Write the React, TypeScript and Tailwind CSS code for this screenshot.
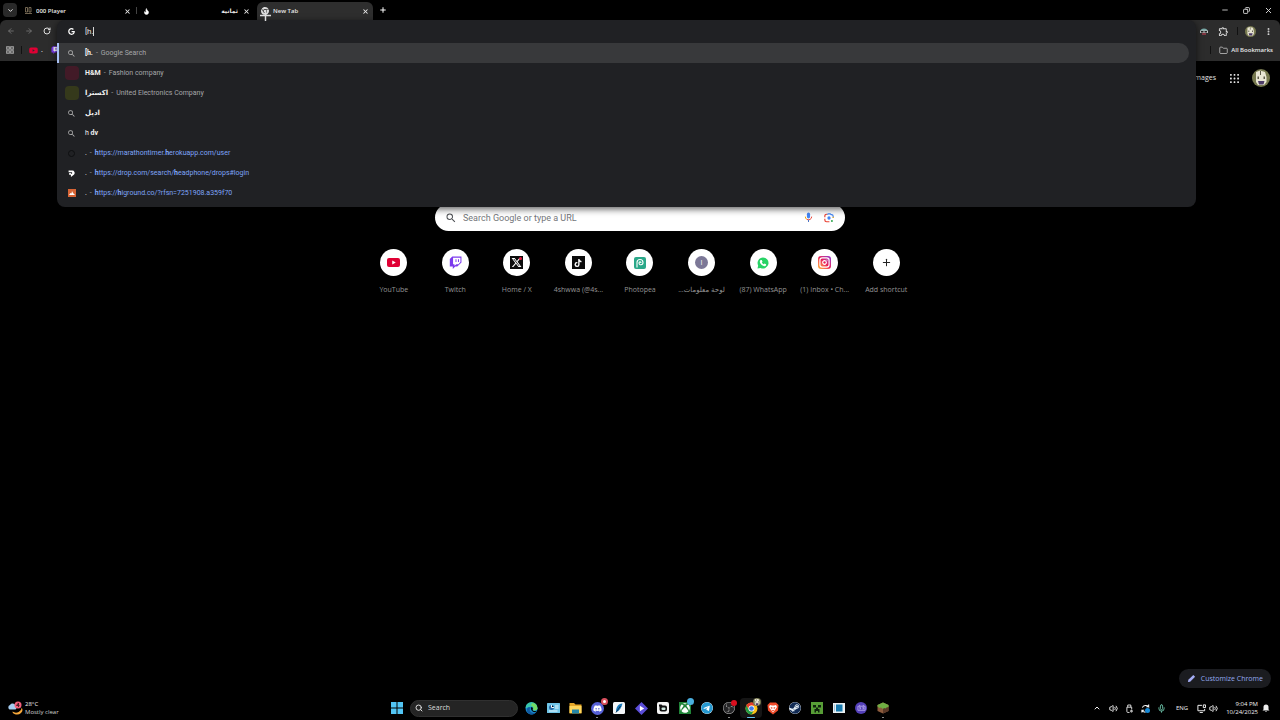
import React from "react";
import {
  FaYoutube, FaXTwitter, FaTiktok, FaWhatsapp, FaDiscord, FaSteam, FaXbox, FaTelegram, FaGoogle, FaChrome,
} from "react-icons/fa6";
import { SiObsstudio } from "react-icons/si";
import { MdSearch, MdOutlineExtension } from "react-icons/md";
import {
  ChevronDown, ChevronUp, X, Plus, ArrowLeft, ArrowRight, RotateCw, Search, Minus, Copy, Folder,
  EllipsisVertical, Volume2, Mic, Flame, Instagram,
} from "lucide-react";

function TwitchMark({ className }: { className: string }) {
  return (
    <svg viewBox="0 0 24 24" className={className}>
      <path d="M6 1 1.5 5.5v14H7V24l4.5-4.5h3.8L23 12V1z" fill="#7c3aed" />
      <path d="M7.5 3h13.6v8.2L17.5 15h-4l-3.4 3.2V15h-2.6z" fill="#fff" />
      <path d="M12 6.2h1.8v5H12zM16.6 6.2h1.8v5h-1.8z" fill="#7c3aed" />
    </svg>
  );
}

function Avatar({ className }: { className: string }) {
  return (
    <svg viewBox="0 0 18 18" className={className}>
      <circle cx="9" cy="9" r="9" fill="#77794f" />
      <path d="M4 3 8 1.500 13 3l1.500 5v5L12 16H6l-2-3z" fill="#e9e6d4" />
      <path d="M5.500 7.500h1.500v2.500H5.500zM11.500 7.500H13v2.500h-1.500zM8 2h1v4H8z" fill="#5d5a49" />
      <path d="M6 12h6.500l-1 3.500H7z" fill="#4c3b66" />
    </svg>
  );
}

function ChromeMark({ className }: { className: string }) {
  return (
    <svg viewBox="0 0 24 24" className={className}>
      <circle cx="12" cy="12" r="11" fill="#fbc116" />
      <path d="M2.5 6.5A11 11 0 0 1 21.5 6.5H12a5.5 5.5 0 0 0-4.8 8.3z" fill="#e33b2e" />
      <path d="M2.5 6.5A11 11 0 0 0 12 23l4.8-8.2a5.5 5.5 0 0 1-9.6 0z" fill="#229b48" />
      <circle cx="12" cy="12" r="5.5" fill="#fff" />
      <circle cx="12" cy="12" r="4.3" fill="#3f7de8" />
    </svg>
  );
}

function GridDots({ className }: { className: string }) {
  return (
    <svg viewBox="0 0 10 10" className={className} fill="currentColor">
      {[0, 4, 8].map((y) => [0, 4, 8].map((x) => <rect key={`${x}-${y}`} x={x} y={y} width="2" height="2" rx="0.5" />))}
    </svg>
  );
}

function Tab({ icon, title, active, rtl, width }: { icon: React.ReactNode; title: string; active?: boolean; rtl?: boolean; width: string }) {
  return (
    <div className={`flex h-[18px] items-center gap-1 self-end rounded-t-md px-1 ${width} ${active ? "bg-[#2e2e2e]" : ""}`}>
      <span className="flex w-2 shrink-0 justify-center">{icon}</span>
      <span className="min-w-0 flex-1 truncate text-[6px] font-semibold leading-[10px] text-[#e8e8e8]" dir={rtl ? "rtl" : "ltr"}>{title}</span>
      <button aria-label={`Close ${title}`} className="flex w-2 justify-center text-[#e8e8e8]"><X size={7} strokeWidth={3.5} /></button>
    </div>
  );
}

type Row = { icon: React.ReactNode; body: React.ReactNode };
const lens = <MdSearch size={9} className="text-[#b8b8b8]" />;
const dash = <span className="px-[3px] text-[#a0a0a0]">-</span>;
const rows: Row[] = [
  { icon: lens, body: <><b>[h.</b>{dash}<span className="text-[#a5a6a8]">Google Search</span></> },
  { icon: <span className="size-[14px] rounded-sm bg-[#421a27]" />, body: <><b>H&amp;M</b>{dash}<span className="text-[#a5a6a8]">Fashion company</span></> },
  { icon: <span className="size-[14px] rounded-sm bg-[#35391b]" />, body: <><b>اكسترا</b>{dash}<span className="text-[#a5a6a8]">United Electronics Company</span></> },
  { icon: lens, body: <b>اديل</b> },
  { icon: lens, body: <>h <b>dv</b></> },
  { icon: <span className="size-[7px] rounded-full border border-[#0e0f10]" />, body: <>.{dash}<a href="#timer" className="text-[#7ea4f8]"><b>h</b>ttps://marathontimer.<b>h</b>erokuapp.com/user</a></> },
  {
    icon: <svg viewBox="0 0 12 12" className="size-[7px]"><path d="M1 1h6a4 4 0 0 1 3 7L5 12V8H2V5h3v1.500h2V4H1z" fill="#fff" /></svg>,
    body: <>.{dash}<a href="#drop" className="text-[#7ea4f8]"><b>h</b>ttps://drop.com/search/<b>h</b>eadphone/drops#login</a></>,
  },
  {
    icon: <svg viewBox="0 0 16 16" className="size-2"><path d="M0 0h16v16H0z" fill="#d66435" /><path d="m2 12 3-4 2 1 1-5 2 4 4 4z" fill="#fff" /></svg>,
    body: <>.{dash}<a href="#higround" className="text-[#7ea4f8]"><b>h</b>ttps://<b>h</b>iground.co/?rfsn=7251908.a359f70</a></>,
  },
];

function Omnibox() {
  return (
    <section aria-label="Address bar" className="absolute left-[57px] right-[84px] top-5 z-10 rounded-lg bg-[#202124] pb-1 font-[Roboto,'DejaVu_Sans',sans-serif] shadow-[0_2px_7px_rgba(0,0,0,0.65)]">
      <div className="flex h-[23px] items-center pl-[11px]">
        <FaGoogle size={7} className="mr-[10px] shrink-0 text-white" />
        <input aria-label="Search or enter address" defaultValue="[h." className="w-2 bg-transparent p-0 text-[8px] leading-3 text-[#e2e2e2] outline-none" />
        <span className="h-[9px] w-px bg-[#d8d8d8]" />
      </div>
      <ul>
        {rows.map((row, i) => (
          <li key={i} className={`mr-[7px] flex h-5 items-center border-l-2 pl-1 text-[7px] leading-[10px] text-[#f0f0f0] ${i === 0 ? "rounded-r-full border-[#a8c1f5] bg-[#38393b]" : "border-transparent"}`}>
            <span className="mr-[5px] flex w-[17px] shrink-0 items-center justify-center">{row.icon}</span>
            <span className="whitespace-nowrap">{row.body}</span>
          </li>
        ))}
      </ul>
    </section>
  );
}

const shortcuts: { label: string; icon: React.ReactNode; rtl?: boolean }[] = [
  { label: "YouTube", icon: <svg viewBox="0 0 26 18" className="w-[13px]"><rect width="26" height="18" rx="4" fill="#e00034" /><path d="m10.5 5 7 4-7 4z" fill="#fff" /></svg> },
  { label: "Twitch", icon: <TwitchMark className="size-[13px]" /> },
  { label: "Home / X", icon: <span className="relative flex size-[13px] items-center justify-center bg-[#0b0b0b] text-white"><FaXTwitter size={11} /><i className="absolute right-px top-px size-[3px] rounded-full bg-[#e5173e]" /></span> },
  { label: "4shwwa (@4s...", icon: <span className="flex size-[13px] items-center justify-center bg-[#0b0b0b] text-white"><FaTiktok size={8} /></span> },
  { label: "Photopea", icon: <svg viewBox="0 0 24 24" className="size-3"><rect width="24" height="24" rx="4" fill="#2aa889" /><path d="M6 21V11a6 6 0 0 1 12 0c0 6-8 6-8 1 0-3 4-3 4 0" fill="none" stroke="#fff" strokeWidth="2.2" /></svg> },
  { label: "لوحة معلومات...", rtl: true, icon: <span className="flex size-[13px] items-center justify-center rounded-full bg-[#7c7897] text-[7px] leading-none text-white">I</span> },
  {
    label: "(87) WhatsApp",
    icon: (
      <svg viewBox="0 0 24 24" className="size-3">
        <path d="M12 1a11 11 0 1 1-5 20.800L1 23l1.300-6A11 11 0 0 1 12 1z" fill="#28d366" />
        <path d="M7 6h2.500l1.500 3.500-1.300 1.500c1 1.800 2 2.700 3.800 3.500l1.500-1.600 3.200 1.600v2c-1.500 2.500-4 2-7 .5-3.500-2-6-5.500-5.500-8.500z" fill="#fff" />
      </svg>
    ),
  },
  { label: "(1) Inbox • Ch...", icon: <span className="flex size-[13px] items-center justify-center rounded-[3px] bg-linear-to-tr from-[#ffb52b] via-[#ec1558] to-[#8c20d5] text-white"><Instagram size={11} strokeWidth={2.5} /></span> },
  { label: "Add shortcut", icon: <Plus size={11} strokeWidth={2.2} className="text-[#222]" /> },
];

function NewTabPage() {
  return (
    <main className="relative flex flex-1 flex-col">
      <nav className="flex h-[34px] items-center justify-end pr-[10px] text-[#e4e4e4]">
        <a href="#images" className="mr-[14px] text-[7px] font-medium leading-3">Images</a>
        <button aria-label="Google apps" className="mr-[13px]"><GridDots className="size-[9px]" /></button>
        <button aria-label="Account"><Avatar className="size-[18px]" /></button>
      </nav>
      <div className="mx-auto mt-[109px] flex h-[27px] w-full max-w-[410px] items-center rounded-full bg-white px-[11px]">
        <MdSearch size={12} className="-ml-px shrink-0 text-[#4b4e52]" />
        <input aria-label="Search Google" placeholder="Search Google or type a URL" className="ml-[6px] min-w-0 flex-1 bg-transparent font-[Roboto,sans-serif] text-[9px] leading-3 outline-none placeholder:text-[#73767a]" />
        <button aria-label="Search by voice" className="mr-[11px]">
          <svg viewBox="0 0 20 24" className="h-[11px] w-[9px]" fill="none" strokeWidth="2.2">
            <rect x="6.5" y="1" width="7" height="13" rx="3.5" fill="#4285f4" />
            <path d="M3 10a7 7 0 0 0 3 6" stroke="#f2a600" /><path d="M17 10a7 7 0 0 1-11 6" stroke="#ea4335" /><path d="M10 17v5" stroke="#4773c5" />
          </svg>
        </button>
        <button aria-label="Search by image">
          <svg viewBox="0 0 24 24" className="size-[10px]" fill="none" strokeWidth="2.8">
            <path d="M2 10V7a4 4 0 0 1 4-4h2" stroke="#ea4335" /><path d="M8 4l2-2h5l2 2h1a4 4 0 0 1 4 4v3" stroke="#4285f4" />
            <path d="M2 14v3a4 4 0 0 0 4 4h7" stroke="#ea4335" /><path d="M22 9v3" stroke="#f2a600" />
            <circle cx="12" cy="12" r="4" fill="#4285f4" /><circle cx="19" cy="19" r="2.5" fill="#34a853" />
          </svg>
        </button>
      </div>
      <ul className="mx-auto mt-[18px] grid w-full max-w-[554px] grid-cols-9">
        {shortcuts.map((s) => (
          <li key={s.label}>
            <a href="#shortcut" className="flex flex-col items-center gap-[9px]">
              <span className="flex size-[27px] items-center justify-center rounded-full bg-white">{s.icon}</span>
              <span dir={s.rtl ? "rtl" : "ltr"} className="whitespace-nowrap text-[7px] leading-[10px] text-[#949494]">{s.label}</span>
            </a>
          </li>
        ))}
      </ul>
      <button className="absolute bottom-2 right-[9px] flex h-[19px] items-center gap-1 rounded-full bg-[#1b1c20] px-2 text-[7px] font-medium leading-3 text-[#93a9ee]">
        <svg viewBox="0 0 20 20" className="mr-px size-[9px]"><path d="m2 18 1-5L14 2l4 4L7 17z" fill="#a5adf5" /></svg> Customize Chrome
      </button>
    </main>
  );
}

const apps: { name: string; icon: React.ReactNode; mark?: string }[] = [
  {
    name: "Edge",
    icon: <svg viewBox="0 0 24 24" className="size-[13px]"><circle cx="12" cy="12" r="11" fill="#168bd1" /><path d="M1 11A11 11 0 0 1 23 11c0 4-3 5-8 4 2-4-1-7-5-6-5 0-8 3-9 2" fill="#39c6ad" /><path d="M13 2a11 11 0 0 1 10 10c-1 4-5 4-8 3 2-5-1-8-4-8z" fill="#72db62" /><path d="M10 10c-4 5 1 13 10 9-6 9-20 2-16-7 1-2 4-3 6-2" fill="#115a9f" /><path d="M11 10c4-1 4 2 3 5 2 2 5 2 8 1-4 5-12 1-11-6" fill="#020407" /></svg>,
  },
  { name: "Control Panel", icon: <svg viewBox="0 0 26 20" className="w-[13px]"><rect width="26" height="20" rx="1" fill="#70c5e8" /><circle cx="9" cy="9" r="5" fill="#276ba8" /><path d="M9 4v5h5M16 6h7M16 10h7M4 16h17" stroke="#eaf8ff" strokeWidth="2" /></svg> },
  { name: "File Explorer", icon: <svg viewBox="0 0 26 24" className="w-[13px]"><path d="M1 2h9l3 3h12v18H1z" fill="#e6a728" /><path d="M1 8h24v14H1z" fill="#ffd65c" /><path d="M6 15h14v8H6z" fill="#2486a7" /></svg> },
  { name: "Discord", mark: "w-[2px] bg-[#999]", icon: <span className="relative flex size-[13px] items-center justify-center rounded-full bg-[#5661d7] text-white"><FaDiscord size={9} /><i className="absolute -right-1 -top-1 size-[7px] rounded-full border-2 border-[#d9505e] bg-white" /></span> },
  { name: "Quill", icon: <svg viewBox="0 0 24 24" className="size-3"><rect width="24" height="24" rx="3" fill="#f3f6f8" /><path d="M19 3C10 4 6 10 6 20c7-2 11-8 13-17" fill="#1678b9" /><path d="m6 21 9-13" stroke="#0a3153" strokeWidth="2" /></svg> },
  { name: "Clips", icon: <svg viewBox="0 0 24 24" className="size-[13px]"><path d="m12 0 12 12-12 12L0 12z" fill="#5b4dd8" /><path d="m9 7 8 5-8 5z" fill="#fff" /></svg> },
  { name: "Camera", icon: <svg viewBox="0 0 24 24" className="size-3"><rect width="24" height="24" rx="4" fill="#f5f5f5" /><path d="M4 5h5l2 2h5a4 4 0 0 1 4 4v4a4 4 0 0 1-4 4H9a4 4 0 0 1-4-4V9H4z" fill="#101010" /><rect x="9" y="11" width="8" height="5" rx="2" fill="#cfe8df" /></svg> },
  { name: "Xbox", icon: <span className="relative flex size-3 items-center justify-center bg-[#208438] text-white"><FaXbox size={10} /><i className="absolute -right-[3px] -top-1 size-[7px] rounded-full bg-[#4aafdf]" /></span> },
  { name: "Telegram", icon: <FaTelegram size={12} className="rounded-full bg-white text-[#2698cf]" /> },
  { name: "OBS Studio", mark: "w-[2px] bg-[#999]", icon: <span className="relative rounded-full bg-[#242426] text-[#aaa]"><SiObsstudio size={12} /><i className="absolute -right-0.5 -top-0.5 size-[6px] rounded-full bg-[#d90e1e]" /></span> },
  { name: "Chrome", mark: "w-2 bg-[#67c4f1]", icon: <span className="relative"><ChromeMark className="size-[13px]" /><Avatar className="absolute -right-[3px] -top-1 size-2" /></span> },
  { name: "Brave", icon: <svg viewBox="0 0 24 26" className="h-[13px] w-3"><path d="m6 1-5 5 1 11 10 8 10-8 1-11-5-5z" fill="#ee4a29" /><path d="m6 6 4 1h4l4-1 2 4-4 6-4 5-4-5-4-6z" fill="#fff" /><path d="m7 10 4 1-1 4zM17 10l-4 1 1 4zM9 17l3 2 3-2-3-1z" fill="#ee4a29" /></svg> },
  { name: "Steam", icon: <FaSteam size={12} className="rounded-full bg-[#e3edf5] text-[#112b55]" /> },
  { name: "Minecraft Launcher", icon: <svg viewBox="0 0 24 24" className="size-3"><path d="M0 0h24v24H0z" fill="#579d36" /><path d="M4 6h6v5H4zM14 6h6v5h-6zM10 11h4v3h3v7h-3v-3h-4v3H7v-7h3z" fill="#0e210c" /></svg> },
  { name: "Window", icon: <svg viewBox="0 0 24 20" className="w-3"><path d="M0 0h24v20H0z" fill="#e9eff2" /><path d="M6 3h13v14H6z" fill="#1578ad" /><path d="M2 3h2v14H2z" fill="#9dc5d9" /></svg> },
  { name: "Bot", icon: <span className="flex size-3 items-center justify-center rounded-full bg-[#5440b9]"><svg viewBox="0 0 20 16" className="w-[9px]"><path d="M2 5h16v9H2zM6 2v3M14 2v3M5 8h3v3H5M12 8h3v3h-3" fill="none" stroke="#bcaef2" strokeWidth="1.8" /></svg></span> },
  { name: "Minecraft", mark: "w-[2px] bg-[#999]", icon: <svg viewBox="0 0 24 24" className="size-3"><path d="m12 1 11 5v12l-11 5-11-5V6z" fill="#8c5b3d" /><path d="m12 11 11-5v12l-11 5z" fill="#5b3928" /><path d="m12 1 11 5v4l-4 1-2 2-3-1-2 2-4-3-3 1-4-3V6z" fill="#70ae43" /></svg> },
];

function Taskbar() {
  return (
    <footer className="grid h-6 grid-cols-[1fr_auto_1fr] items-center bg-black text-[#f0f0f0]">
      <button className="flex items-center gap-[2px] justify-self-start pl-2 text-left">
        <svg viewBox="0 0 30 28" className="h-[14px] w-[15px]">
          <path d="M13 26a11 9 0 0 0 14-13 11 9 0 0 1-18 8c0 2 1 4 4 5" fill="#f7a83a" />
          <path d="M3 17a5 5 0 0 1 1-9 6 6 0 0 1 11 2 4 4 0 0 1 0 7z" fill="#a5cdf2" />
          <circle cx="20" cy="8" r="7" fill="#f25f7b" /><path d="m21 4-4 5h6M21 4v8" fill="none" stroke="#4d1e2a" strokeWidth="2" />
        </svg>
        <span className="text-[6px] leading-2">28°C<br /><span className="text-[#d0d0d0]">Mostly clear</span></span>
      </button>
      <div className="flex h-6 items-center">
        <button aria-label="Start" className="flex w-[22px] justify-center">
          <svg viewBox="0 0 24 24" className="size-3" fill="#52c5f4"><path d="M0 0h11v11H0zM13 0h11v11H13zM0 13h11v11H0zM13 13h11v11H13z" /></svg>
        </button>
        <label className="mx-0.5 flex h-[17px] w-[108px] items-center gap-[5px] rounded-full border border-[#303030] bg-[#242424] px-1">
          <Search size={8} strokeWidth={3} className="shrink-0 text-[#dcdcdc]" />
          <input aria-label="Search" placeholder="Search" className="w-full min-w-0 bg-transparent text-[7px] leading-3 outline-none placeholder:text-[#dcdcdc]" />
        </label>
        {apps.map((a) => (
          <button key={a.name} aria-label={a.name} className={`relative flex h-5 w-[22px] items-center justify-center rounded-sm ${a.name === "Chrome" ? "bg-[#151515]" : ""}`}>
            {a.icon}
            {a.mark && <i className={`absolute inset-x-0 bottom-0 mx-auto h-px rounded-full ${a.mark}`} />}
          </button>
        ))}
      </div>
      <div className="flex items-center justify-self-end pr-[10px] text-[6px] leading-2">
        <ChevronUp size={8} strokeWidth={3} className="mr-2" />
        <Volume2 size={9} strokeWidth={2.5} className="mr-2" />
        <svg viewBox="0 0 16 20" className="mr-2 h-[9px] w-[7px]" fill="none" stroke="currentColor" strokeWidth="2"><path d="M4 7V2h7v5M2 7h11v5M2 7v10q0 2 2 2h4M11 14h3v4h-3z" /></svg>
        <span className="relative mr-[7px]">
          <svg viewBox="0 0 20 20" className="size-[9px]" fill="none" stroke="currentColor" strokeWidth="2.4"><path d="M3 8a8 7 0 0 1 14-2V1M17 6h-5M2 19v-5h5M2 14a8 7 0 0 0 8 4" /></svg>
          <i className="absolute bottom-0 right-0 size-[5px] rounded-full bg-[#1688d5]" />
        </span>
        <Mic size={9} strokeWidth={2.5} className="mr-[10px] text-[#69bda3]" />
        <span className="mr-[9px]">ENG</span>
        <svg viewBox="0 0 20 20" className="mr-[3px] size-[9px]" fill="none" stroke="currentColor" strokeWidth="2.2"><path d="M11 3H2v12h15v-4M6 19h7M14 2h5v6h-5z" /></svg>
        <Volume2 size={9} strokeWidth={2.5} className="mr-2" />
        <time className="mr-1 text-right">9:04 PM<br />10/24/2025</time>
        <svg viewBox="0 0 16 16" className="size-2" fill="#eee"><path d="M3 11V6a5 5 0 0 1 10 0v5l2 2H1zM6 14h4l-2 2z" /></svg>
      </div>
    </footer>
  );
}

export default function App() {
  return (
    <div className="relative flex min-h-screen flex-col bg-black font-['Open_Sans','Noto_Sans','DejaVu_Sans',sans-serif]">
      <header>
        <div className="flex h-5 items-center">
          <button aria-label="Search tabs" className="ml-[3px] mr-[3px] flex size-[14px] items-center justify-center rounded bg-[#292929] text-white"><ChevronDown size={7} strokeWidth={3} /></button>
          <Tab width="w-[115px]" title="000 Player" icon={<svg viewBox="0 0 14 16" className="h-2 w-[7px]"><path d="M1 1h4v9H1zM8 1h4v9H8zM0 13h14" fill="none" stroke="#8e7d64" strokeWidth="1.6" /></svg>} />
          <span className="mx-px h-[7px] w-px bg-[#444]" />
          <Tab width="w-[116px]" title="ثمانية" rtl icon={<Flame size={7} fill="white" className="text-white" />} />
          <span className="w-[3px]" />
          <Tab width="w-[116px]" title="New Tab" active icon={<FaChrome size={8} className="text-[#ddd]" />} />
          <button aria-label="New tab" className="ml-[6px] text-white"><Plus size={8} strokeWidth={3} /></button>
          <div className="ml-auto flex items-center gap-[14px] pr-[7px] text-[#ddd]">
            <button aria-label="Minimize"><Minus size={8} strokeWidth={2.5} /></button>
            <button aria-label="Restore"><Copy size={7} strokeWidth={3} className="-scale-x-100" /></button>
            <button aria-label="Close"><X size={9} strokeWidth={2.5} /></button>
          </div>
        </div>
        <div className="rounded-t-md bg-[#2c2c2c]">
          <div className="flex h-[22px] items-center justify-between px-[7px]">
            <div className="flex gap-[10px]">
              <button aria-label="Back" className="text-[#777]"><ArrowLeft size={8} strokeWidth={2.5} /></button>
              <button aria-label="Forward" className="text-[#777]"><ArrowRight size={8} strokeWidth={2.5} /></button>
              <button aria-label="Reload" className="text-[#e0e0e0]"><RotateCw size={8} strokeWidth={3} /></button>
            </div>
            <div className="flex items-center text-[#ddd]">
              <button aria-label="Extension" className="mr-[10px]"><svg viewBox="0 0 16 14" className="w-2"><path d="M1 6a7 5 0 0 1 14 0z" fill="#79a8a6" /><path d="M0 5h16v5H0z" fill="#c3c3c3" /><path d="M2 6h5v3H2zM9 6h5v3H9z" fill="#222" /><path d="M4 12h8" stroke="#b43d4f" strokeWidth="2.500" /></svg></button>
              <button aria-label="Extensions"><MdOutlineExtension size={11} /></button>
              <span className="ml-2 mr-[7px] h-2 w-px bg-[#111]" />
              <button aria-label="Profile"><Avatar className="size-[11px]" /></button>
              <button aria-label="Menu" className="ml-2"><EllipsisVertical size={9} strokeWidth={3} /></button>
            </div>
          </div>
          <div className="flex h-[19px] items-start justify-between pl-[6px] pr-[7px] pt-0.5">
            <div className="flex h-3 items-center">
              <svg viewBox="0 0 16 16" className="size-2" fill="none" stroke="#aaa" strokeWidth="2.4"><path d="M1.5 1.5h5v5h-5zM9.5 1.5h5v5h-5zM1.5 9.5h5v5h-5zM9.5 9.5h5v5h-5z" /></svg>
              <span className="mx-[7px] h-2 w-px bg-[#111]" />
              <FaYoutube size={9} className="text-[#e00034]" />
              <span className="ml-[3px] mr-2 text-[7px] leading-[10px] text-white">.</span>
              <TwitchMark className="size-2" />
            </div>
            <a href="#bookmarks" className="flex h-3 items-center text-[6px] font-semibold leading-[10px] text-[#e8e8e8]">
              <span className="mr-2 h-2 w-px bg-[#111]" /><Folder size={9} className="mr-[3px] text-[#ccc]" />All Bookmarks
            </a>
          </div>
        </div>
      </header>
      <Omnibox />
      <svg viewBox="0 0 12 12" className="pointer-events-none absolute left-[260px] top-[10px] z-20 size-[11px]"><path d="M6 0v12M0 6h12" stroke="#ddd" strokeWidth="1.6" /></svg>
      <NewTabPage />
      <Taskbar />
    </div>
  );
}
